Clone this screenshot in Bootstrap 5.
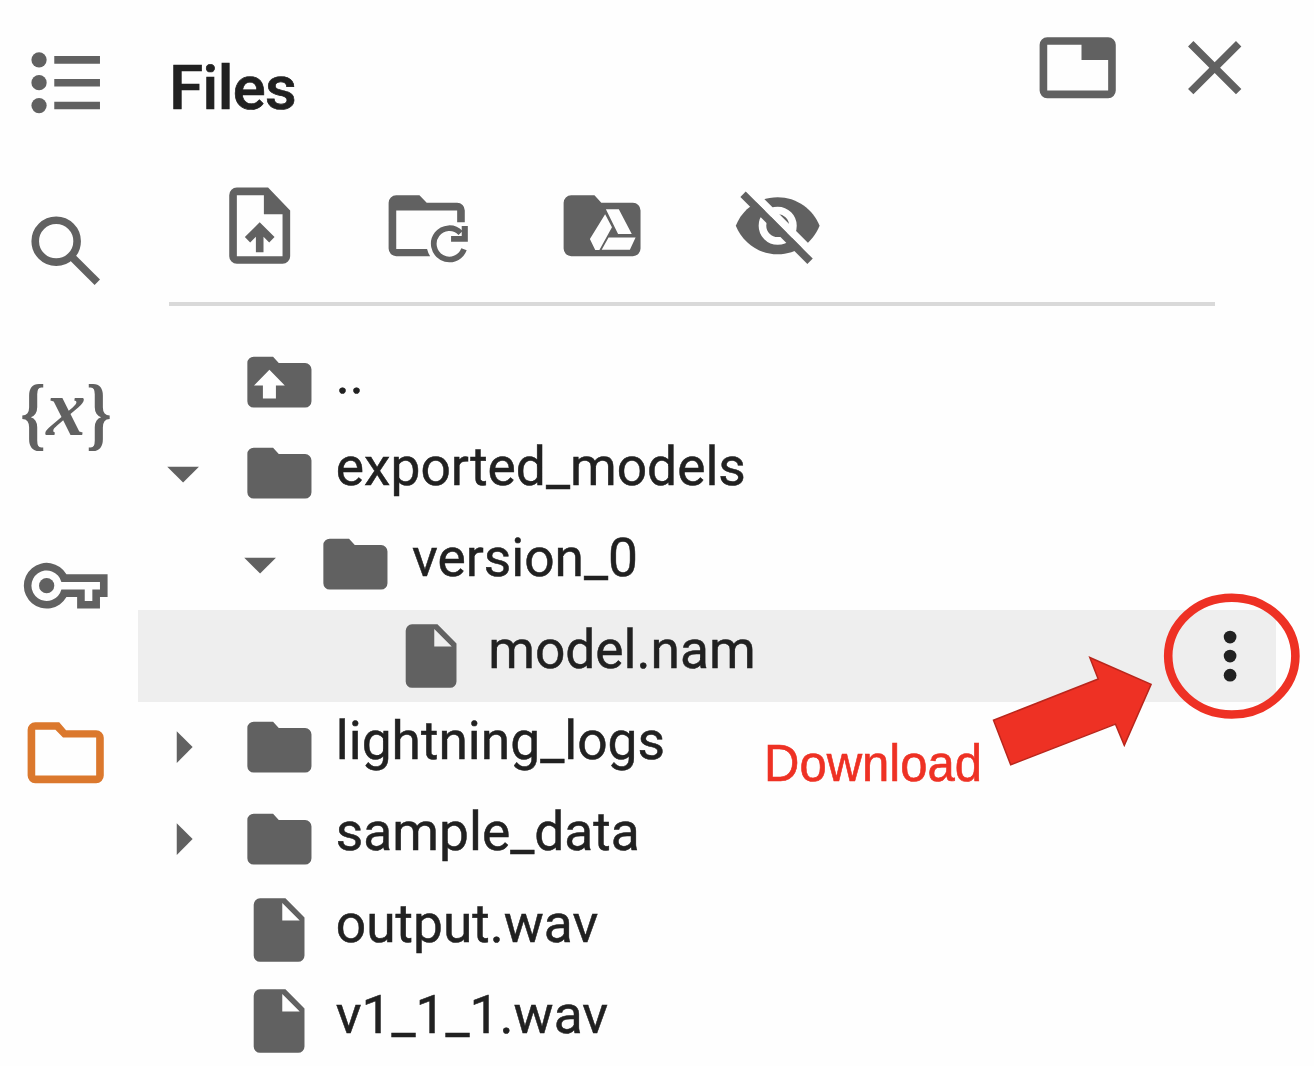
<!DOCTYPE html>
<html lang="en">
<head>
<meta charset="utf-8">
<meta name="viewport" content="width=device-width, initial-scale=1">
<title>Files</title>
<link href="https://cdn.jsdelivr.net/npm/bootstrap@5.3.0/dist/css/bootstrap.min.css" rel="stylesheet">
<style>
  body { background: #fefefe; color: #212121; font-family: Roboto, sans-serif; width: 1314px; height: 1066px; overflow: hidden; }
  svg { display: block; flex: none; fill: #616161; }
  .rail { width: 138px; padding-right: 6.8px; margin-top: -1.1px; }
  .rail-item { height: 167.6px; }
  .ico { width: 91.4px; height: 91.4px; }
  .vars { font-family: "Liberation Serif", serif; font-weight: 700; }
  .ico-active { fill: #db782d; }
  .panel-head { height: 180px; padding: 22px 53.5px 0 31.3px; }
  .panel-title { font-size: 61.5px; font-weight: 500; line-height: 72px; margin: 29.500px 0 0 0; letter-spacing: -.6px; -webkit-text-stroke: .7px #212121; }
  .head-tools { gap: 45.8px; }
  .tools { height: 122px; padding-left: 76px; }
  .tools svg + svg { margin-left: 83.7px; }
  .tools svg:nth-child(2) { margin-left: 76px; }
  .rule { height: 4px; margin: 0 99px 0 30.5px; background: #d9d9d9; }
  .tree { margin: 30.1px 38.5px 0 0; }
  .tree-row { height: 91.4px; padding: 0 7.1px 0 7.4px; }
  .tree-row svg { width: 76.2px; height: 76.2px; }
  .picked { background: #eee; }
  .indent { width: 76.2px; flex: none; }
  .twisty { width: 76.2px; margin-right: 19px; flex: none; }
  .label { font-size: 53.3px; line-height: 64px; padding-bottom: 12.6px; margin-left: 19px; white-space: nowrap; -webkit-text-stroke: .5px #212121; }
  .tree-row .dots { fill: #212121; }
  .note { left: 0; top: 0; pointer-events: none; }
  .note-text { left: 764px; top: 733.5px; color: #ee3124; font: 49px/60px "Liberation Sans", Arial, sans-serif; -webkit-text-stroke: .6px #ee3124; transform: scaleY(1.04); transform-origin: 0 48px; }
</style>
</head>
<body class="d-flex position-relative">
<svg width="0" height="0" class="position-absolute" aria-hidden="true">
  <symbol id="folder" viewBox="0 0 24 24"><path d="M10.100 4H4a2 2 0 0 0-2 2v12a2 2 0 0 0 2 2h16.200a2 2 0 0 0 2-2V8a2 2 0 0 0-2-2h-8.300z"/></symbol>
  <symbol id="file" viewBox="0 0 24 24"><path fill-rule="evenodd" d="M6 2a2 2 0 0 0-2 2v16a2 2 0 0 0 2 2h12a2 2 0 0 0 2-2V8l-6-6zM13 3.500V9h5.500z"/></symbol>
  <symbol id="open" viewBox="0 0 24 24"><path d="M7 10l5 5 5-5z"/></symbol>
  <symbol id="closed" viewBox="0 0 24 24"><path d="M10 17l5-5-5-5z"/></symbol>
</svg>

<nav class="rail d-flex flex-column align-items-center flex-shrink-0">
  <div class="rail-item d-flex align-items-center"><svg class="ico" viewBox="0 0 24 24"><circle cx="5" cy="6" r="2"/><circle cx="5" cy="12" r="2"/><circle cx="5" cy="18" r="2"/><path d="M9 5h12v2H9zM9 11h12v2H9zM9 17h12v2H9z"/></svg></div>
  <div class="rail-item d-flex align-items-center"><svg class="ico" viewBox="0 0 24 24"><g fill="none" stroke="#616161" stroke-width="2"><circle cx="9.500" cy="9.500" r="5.500"/><path d="M13.400 13.400l6.900 6.900"/></g></svg></div>
  <div class="rail-item d-flex align-items-center"><svg class="vars" width="130" height="130" viewBox="0 0 130 130"><text x="19.200" y="87" font-size="81" textLength="25.500" lengthAdjust="spacingAndGlyphs">{</text><text x="45.200" y="81.500" font-size="80" font-style="italic" textLength="39.500" lengthAdjust="spacingAndGlyphs">x</text><text x="85.200" y="87" font-size="81" textLength="25.500" lengthAdjust="spacingAndGlyphs">}</text></svg></div>
  <div class="rail-item d-flex align-items-center"><svg class="ico" viewBox="0 0 24 24"><path fill-rule="evenodd" d="M21 18h-6v-3h-2.800A6 6 0 1 1 12.200 9H23v6h-2zM17 16h2v-3h2v-2H10.870a4 4 0 1 0 0 2H17z"/><circle cx="7" cy="12" r="2"/></svg></div>
  <div class="rail-item d-flex align-items-center"><svg class="ico ico-active" viewBox="0 0 24 24"><path fill-rule="evenodd" d="M10.300 4H4a2 2 0 0 0-2 2v12a2 2 0 0 0 2 2h16a2 2 0 0 0 2-2V8.100a2 2 0 0 0-2-2h-7.900zM4 6h5.300l2 2H20v10H4z"/></svg></div>
</nav>

<main class="flex-grow-1">
  <header class="panel-head d-flex justify-content-between align-items-start">
    <h1 class="panel-title">Files</h1>
    <div class="head-tools d-flex">
      <svg class="ico" viewBox="0 0 24 24"><path fill-rule="evenodd" d="M4 4a2 2 0 0 0-2 2v12a2 2 0 0 0 2 2h16a2 2 0 0 0 2-2V6a2 2 0 0 0-2-2zM4 6h9v4h7v8H4z"/></svg>
      <svg class="ico" viewBox="0 0 24 24"><path d="M19 6.410L17.590 5 12 10.590 6.410 5 5 6.410 10.590 12 5 17.590 6.410 19 12 13.410 17.590 19 19 17.590 13.410 12z"/></svg>
    </div>
  </header>
  <div class="tools d-flex">
    <svg class="ico" viewBox="0 0 24 24"><path fill-rule="evenodd" d="M6 2a2 2 0 0 0-2 2v16a2 2 0 0 0 2 2h12a2 2 0 0 0 2-2V8l-5.800-6zM6 4h7.100v5H18v11H6z"/><path d="M12 11.100l3.900 3.900-1.400 1.400-1.500-1.500V19h-2v-4.100l-1.500 1.500L8.100 15z"/></svg>
    <svg class="ico" viewBox="0 0 24 24"><path d="M10.100 4H4a2 2 0 0 0-2 2v12a2 2 0 0 0 2 2h8.900a6 6 0 0 1-.8-1.900H4V8h16v3.100h2V8a2 2 0 0 0-2-2h-8z"/><path fill="none" stroke="#616161" stroke-width="1.500" d="M20.900 13.900a4.100 4.100 0 1 0 .9 4.300"/><path d="M21.200 12.100h1.600v4.100h-4.400v-1.500h2.800z"/></svg>
    <svg class="ico" viewBox="0 0 24 24"><use href="#folder"/><path fill="#fefefe" d="M13.100 7.700h3.400l3.400 6.500h-3.600zM12.900 9l1.800 3.400-3.300 6h-1.100L8.900 15.500zM13.800 15.100h7.100l-1.500 3.200H12z"/></svg>
    <svg class="ico" viewBox="0 0 24 24"><path d="M12 4.500C7 4.500 2.730 7.610 1 12c1.730 4.390 6 7.500 11 7.500s9.270-3.110 11-7.500c-1.730-4.390-6-7.500-11-7.500z"/><circle cx="12" cy="12" r="4" fill="none" stroke="#fefefe" stroke-width="2"/><path d="M4.500 2.520l17.500 17.500" stroke="#fefefe" stroke-width="2.100"/><path d="M2.900 3.750l17.600 17.600" stroke="#616161" stroke-width="2"/></svg>
  </div>
  <div class="rule"></div>

  <div class="tree">
    <div class="tree-row d-flex align-items-center"><span class="twisty"></span><svg viewBox="0 0 24 24"><use href="#folder"/><path fill="#fefefe" d="M8.950 8.100l4.850 5H11v4.100H6.900v-4.100H4.100z"/></svg><span class="label">..</span></div>
    <div class="tree-row d-flex align-items-center"><span class="twisty"><svg><use href="#open"/></svg></span><svg><use href="#folder"/></svg><span class="label">exported_models</span></div>
    <div class="tree-row d-flex align-items-center"><span class="indent"></span><span class="twisty"><svg><use href="#open"/></svg></span><svg><use href="#folder"/></svg><span class="label">version_0</span></div>
    <div class="tree-row picked d-flex align-items-center"><span class="indent"></span><span class="indent"></span><span class="twisty"></span><svg><use href="#file"/></svg><span class="label">model.nam</span><svg class="dots ms-auto" viewBox="0 0 24 24"><circle cx="12" cy="6" r="2"/><circle cx="12" cy="12" r="2"/><circle cx="12" cy="18" r="2"/></svg></div>
    <div class="tree-row d-flex align-items-center"><span class="twisty"><svg><use href="#closed"/></svg></span><svg><use href="#folder"/></svg><span class="label">lightning_logs</span></div>
    <div class="tree-row d-flex align-items-center"><span class="twisty"><svg><use href="#closed"/></svg></span><svg><use href="#folder"/></svg><span class="label">sample_data</span></div>
    <div class="tree-row d-flex align-items-center"><span class="twisty"></span><svg><use href="#file"/></svg><span class="label">output.wav</span></div>
    <div class="tree-row d-flex align-items-center"><span class="twisty"></span><svg><use href="#file"/></svg><span class="label">v1_1_1.wav</span></div>
  </div>
</main>

<svg class="note position-absolute" width="1314" height="1066" viewBox="0 0 1314 1066">
  <ellipse cx="1231.800" cy="656.100" rx="63.600" ry="58.400" fill="none" stroke="#ee3124" stroke-width="8.600"/>
  <path d="M1089.800 657.500l61.300 26.900-26.800 61-8.800-21.300-104.800 40.700-17.200-44.600 104.700-41.200z" fill="#ee3124" stroke="#b9261c" stroke-width="1.500"/>
</svg>
<div class="note-text position-absolute">Download</div>
<script src="https://cdn.jsdelivr.net/npm/bootstrap@5.3.0/dist/js/bootstrap.bundle.min.js"></script>
</body>
</html>
